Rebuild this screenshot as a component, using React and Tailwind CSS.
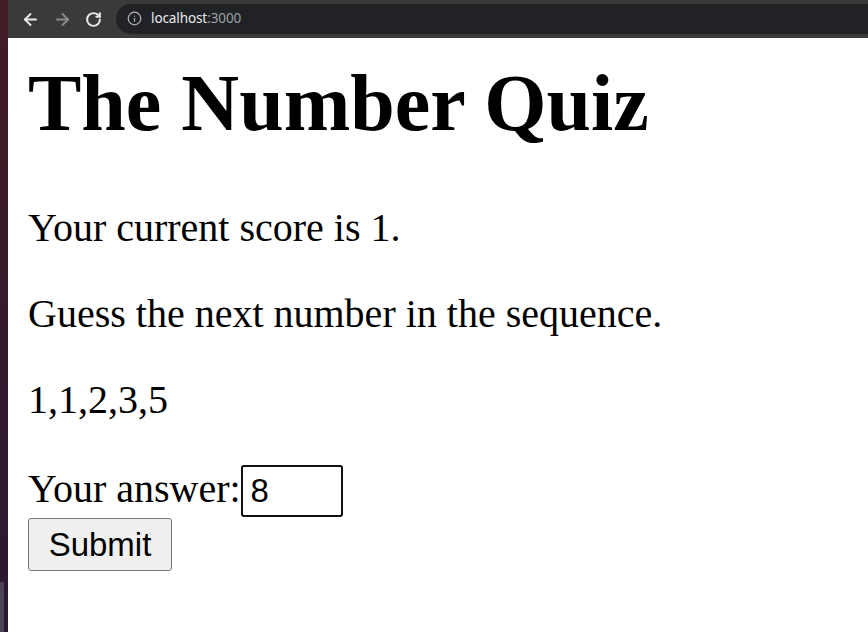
import React from 'react';
import { ArrowLeft, ArrowRight, RotateCw, Info } from 'lucide-react';

// Browser toolbar above the page
const Toolbar = () => (
  <div className="h-[38px] bg-[#3a3a3a] flex items-center shrink-0">
    <div className="w-[108px] flex items-center pl-[13px] gap-[13px]">
      <ArrowLeft size={19} strokeWidth={2.4} className="text-[#e8eaed]" />
      <ArrowRight size={19} strokeWidth={2.4} className="text-[#8b8b8b]" />
      <RotateCw size={17} strokeWidth={2.8} className="text-[#e8eaed]" />
    </div>
    <div className="flex-1 h-[30px] mt-[-1px] bg-[#212225] rounded-l-full flex items-center pl-[11px] gap-[9px] font-['Noto_Sans',sans-serif] text-[13.5px]">
      <Info size={15} strokeWidth={2} className="text-[#b0b3b8]" />
      <span className="text-[#e8eaed] tracking-[-0.1px]">
        localhost<span className="text-[#9aa0a6]">:3000</span>
      </span>
    </div>
  </div>
);

export default function App() {
  return (
    <div className="w-[868px] h-[632px] overflow-hidden flex bg-white">
      {/* desktop edge behind the window */}
      <div className="w-[8px] shrink-0 flex flex-col bg-gradient-to-b from-[#431c25] via-[#35192b] to-[#2a1832]">
        <div className="flex-1" />
        <div className="h-[50px] w-[4px] bg-[#4e4356]" />
      </div>

      <div className="flex-1 flex flex-col">
        <Toolbar />
        <div className="flex-1 bg-white px-[20px] text-black font-['Liberation_Serif',serif]">
          <h1 className="text-[80px] font-bold leading-[92px] mt-[19px] mb-[56px]">The Number Quiz</h1>
          <p className="text-[40px] leading-[46px] mb-[40px]">Your current score is 1.</p>
          <p className="text-[40px] leading-[46px] mb-[40px]">Guess the next number in the sequence.</p>
          <p className="text-[40px] leading-[46px] mb-[42px]">1,1,2,3,5</p>
          <div className="text-[40px] leading-[46px]">
            Your answer:
            <input
              defaultValue="8"
              className="inline-block align-baseline w-[102px] h-[52px] border-2 border-[#101010] rounded-[3px] pl-[8px] text-[33px] font-['Liberation_Sans',sans-serif] outline-none"
            />
          </div>
          <button className="block w-[144px] h-[53px] mt-[1px] bg-[#efefef] border border-[#767676] rounded-[3px] text-[33px] text-black font-['Liberation_Sans',sans-serif]">
            Submit
          </button>
        </div>
      </div>
    </div>
  );
}
